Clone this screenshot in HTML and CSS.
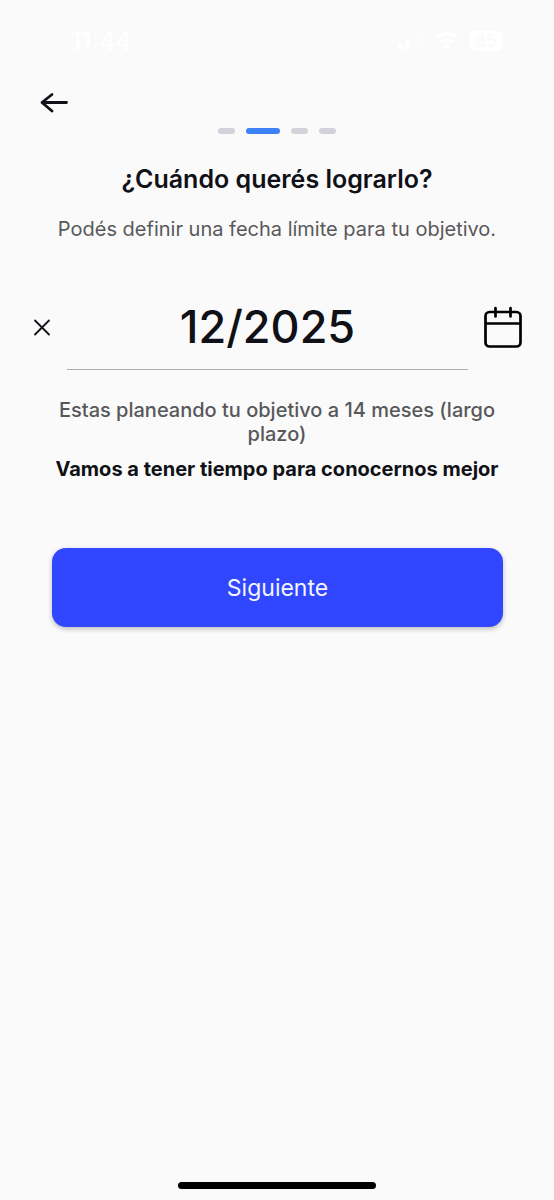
FILE: index.html
```html
<!DOCTYPE html>
<html lang="es">
<head>
<meta charset="utf-8">
<meta name="viewport" content="width=device-width, initial-scale=1">
<title>¿Cuándo querés lograrlo?</title>
<link rel="stylesheet" href="styles.css">
</head>
<body>
<div class="screen">
  <header class="status">
    <time class="clock">11:44</time>
    <div class="indicators">
      <svg width="28" height="20" viewBox="0 0 28 20" aria-hidden="true"><rect x="1" y="12" width="5" height="6" rx="1"/><rect x="8" y="9" width="5" height="9" rx="1"/><rect x="15" y="5" width="5" height="13" rx="1" opacity=".3"/><rect x="22" y="1" width="5" height="17" rx="1" opacity=".3"/></svg>
      <svg width="24" height="20" viewBox="0 0 24 20" fill="none" stroke="currentColor" stroke-width="3" aria-hidden="true"><path d="M2 7a14 14 0 0 1 20 0M6 11.500a8.500 8.500 0 0 1 12 0"/><path d="M12 19l-4-4a5.600 5.600 0 0 1 8 0z" fill="currentColor" stroke="none"/></svg>
      <span class="battery">85</span>
    </div>
  </header>
  <nav class="nav">
    <button class="icon-button" type="button" aria-label="Volver">
      <svg width="30" height="24" viewBox="0 0 30 24" fill="none" stroke="currentColor" stroke-width="2.800" stroke-linecap="round" stroke-linejoin="round" aria-hidden="true"><path d="M27.500 12.500H3M13 4.500L3 12.500l10 8.500"/></svg>
    </button>
  </nav>
  <main class="content">
    <div class="steps" role="img" aria-label="Paso 2 de 4">
      <span class="step"></span><span class="step step-current"></span><span class="step"></span><span class="step"></span>
    </div>
    <h1 class="title">¿Cuándo querés lograrlo?</h1>
    <p class="subtitle">Podés definir una fecha límite para tu objetivo.</p>
    <form class="form">
      <div class="date-row">
        <button class="icon-button" type="button" aria-label="Borrar fecha">
          <svg width="18" height="18" viewBox="0 0 18 18" fill="none" stroke="currentColor" stroke-width="1.800" stroke-linecap="round" aria-hidden="true"><path d="M2 2.500l14 14M16 2.500L2 16.500"/></svg>
        </button>
        <input class="date-input" type="text" value="12/2025" aria-label="Fecha límite">
        <button class="icon-button calendar" type="button" aria-label="Elegir fecha">
          <svg width="38" height="42" viewBox="0 0 38 42" fill="none" stroke="currentColor" stroke-width="2.700" stroke-linecap="round" aria-hidden="true"><rect x="1.500" y="6" width="35" height="34.500" rx="4"/><path d="M2 17.500h34M11.500 2v8.500M26.500 2v8.500"/></svg>
        </button>
      </div>
      <p class="summary">Estas planeando tu objetivo a 14 meses (largo plazo)</p>
      <p class="note">Vamos a tener tiempo para conocernos mejor</p>
      <button class="next" type="submit">Siguiente</button>
    </form>
  </main>
  <div class="home-indicator"></div>
</div>
</body>
</html>
```

FILE: styles.css
```css
* {
  box-sizing: border-box;
}

body {
  margin: 0;
  background: #fafafa;
  color: #101116;
  font-family: Inter, "Liberation Sans", sans-serif;
}

h1,
p {
  margin: 0;
}

.screen {
  display: flex;
  flex-direction: column;
  min-height: 100vh;
}

.status {
  display: flex;
  align-items: center;
  justify-content: space-between;
  height: 82px;
  padding: 0 51px 0 71px;
  color: #fff;
}

.clock {
  font-size: 24px;
  font-weight: 600;
}

.indicators {
  display: flex;
  align-items: center;
  gap: 10px;
  fill: currentColor;
}

.battery {
  width: 34px;
  border-radius: 6px;
  background: #fff;
  color: #fafafa;
  font-size: 17px;
  font-weight: 700;
  line-height: 20px;
  text-align: center;
}

.nav {
  display: flex;
  height: 40px;
  padding: 0 39px;
}

.icon-button {
  display: flex;
  align-items: center;
  justify-content: center;
  padding: 0;
  border: 0;
  background: none;
  color: inherit;
  cursor: pointer;
}

.content {
  display: flex;
  flex-direction: column;
  text-align: center;
}

.steps {
  display: flex;
  justify-content: center;
  gap: 11px;
  padding-top: 6px;
}

.step {
  width: 17px;
  height: 6px;
  border-radius: 3px;
  background: #d2d3da;
}

.step-current {
  width: 34px;
  background: #3c82f6;
}

.title {
  margin-top: 29px;
  font-size: 25px;
  font-weight: 600;
  line-height: 32px;
}

.subtitle {
  margin-top: 20px;
  color: #58585a;
  font-size: 20px;
  line-height: 28px;
}

.form {
  display: flex;
  flex-direction: column;
  margin-top: 41px;
}

.date-row {
  display: flex;
  gap: 16px;
  padding: 0 32px 0 33px;
}

.date-input {
  flex: 1;
  min-width: 0;
  height: 86px;
  padding: 0;
  border: 0;
  border-bottom: 1px solid #b0b0b2;
  background: none;
  color: inherit;
  font: 500 45px Inter, "Liberation Sans", sans-serif;
  text-align: center;
}

.calendar {
  color: #000;
}

.summary,
.note {
  padding: 0 50px;
  font-size: 20px;
  line-height: 24px;
}

.summary {
  margin-top: 28px;
  color: #58585a;
  font-weight: 500;
}

.note {
  margin-top: 11px;
  font-weight: 700;
}

.next {
  height: 79px;
  margin: 67px 51px 0 52px;
  border: 0;
  border-radius: 14px;
  background: #3046ff;
  box-shadow: 0 2px 5px rgba(0, 0, 0, 0.25);
  color: #f4f5ff;
  font: 400 23px Inter, "Liberation Sans", sans-serif;
  cursor: pointer;
}

.home-indicator {
  width: 198px;
  height: 7px;
  margin: auto auto 11px;
  border-radius: 4px;
  background: #000;
}
```
